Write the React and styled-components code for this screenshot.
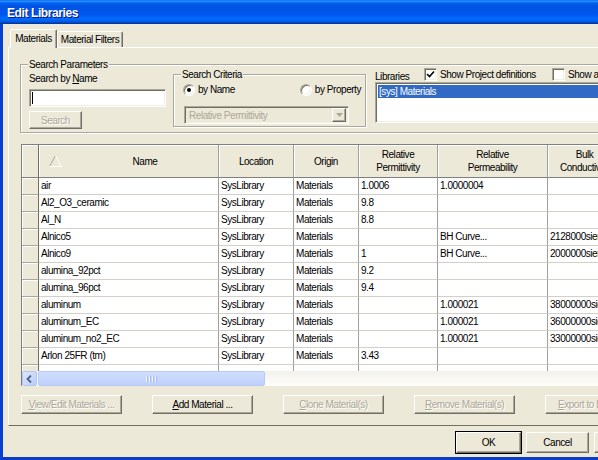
import React from 'react';
import styled, { createGlobalStyle, css } from 'styled-components';

const FACE = '#ECE9D8';
const DARK = '#716F64';
const SHADOW = '#ACA899';

const GlobalStyle = createGlobalStyle`
  html, body {
    margin: 0;
    padding: 0;
    overflow: hidden;
    background: #fff;
  }
`;

const Viewport = styled.div`
  width: 598px;
  height: 460px;
  overflow: hidden;
`;

const Window = styled.div`
  width: 720px;
  height: 460px;
  display: flex;
  flex-direction: column;
  font-family: "Liberation Sans", Arial, sans-serif;
  font-size: 10px;
  letter-spacing: -0.45px;
  color: #000;
`;

const TitleBar = styled.div`
  flex: none;
  height: 24px;
  display: flex;
  align-items: center;
  padding-left: 7px;
  padding-top: 1px;
  box-sizing: border-box;
  background: linear-gradient(
    to bottom,
    #0058ee 0%,
    #3593ff 4%,
    #288eff 6%,
    #127dff 8%,
    #036ffc 10%,
    #0262ee 14%,
    #0057e5 20%,
    #0054e3 24%,
    #0055eb 56%,
    #005bf5 66%,
    #026afe 76%,
    #0062ef 86%,
    #0052d6 92%,
    #0040ab 96%,
    #003092 100%
  );
  color: #fff;
  font-weight: bold;
  font-size: 12px;
  letter-spacing: -0.4px;
  text-shadow: 1px 1px 0 #0a1883;
`;

const Frame = styled.div`
  flex: 1;
  min-height: 0;
  display: flex;
  flex-direction: column;
  background: ${FACE};
  border-left: 3px solid #0840d6;
  border-bottom: 3px solid #0a3cc8;
`;

/* ---------- tabs ---------- */

const TabRow = styled.div`
  position: relative;
  z-index: 1;
  display: flex;
  align-items: flex-end;
  height: 18px;
  margin-top: 5px;
  padding-left: 7px;
`;

const Tab = styled.div`
  box-sizing: border-box;
  width: ${p => p.$w}px;
  height: ${p => (p.$active ? 19 : 16)}px;
  margin-bottom: ${p => (p.$active ? -1 : 0)}px;
  display: flex;
  align-items: center;
  justify-content: center;
  padding-bottom: ${p => (p.$active ? 1 : 0)}px;
  background: ${FACE};
  border: 1px solid;
  border-bottom: none;
  border-color: #fff ${DARK} transparent #fff;
  box-shadow: inset -1px 0 0 ${SHADOW};
  border-radius: 2px 2px 0 0;
`;

const TabPanel = styled.div`
  box-sizing: border-box;
  height: 379px;
  margin-left: 5px;
  padding-left: 11px;
  border-top: 1px solid #fff;
  border-left: 1px solid #fff;
  border-bottom: 1px solid ${DARK};
  display: flex;
  flex-direction: column;
`;

/* ---------- group boxes ---------- */

const GroupBox = styled.div`
  position: relative;
  box-sizing: border-box;
  flex: none;
  width: ${p => p.$w}px;
  height: ${p => p.$h}px;
  border: 1px solid ${SHADOW};
  box-shadow: inset 1px 1px 0 #fff, 1px 1px 0 #fff;
`;

const Legend = styled.span`
  position: absolute;
  top: -7px;
  left: 7px;
  padding: 0 1px;
  line-height: 13px;
  background: ${FACE};
`;

const SearchParams = styled(GroupBox)`
  margin-top: 16px;
  display: flex;
  align-items: flex-start;
`;

const NameColumn = styled.div`
  width: 137px;
  margin-left: 8px;
  padding-top: 7px;
  display: flex;
  flex-direction: column;
`;

const FieldLabel = styled.div`
  line-height: 13px;
  white-space: nowrap;
`;

const Sunken = css`
  box-sizing: border-box;
  border: 1px solid;
  border-color: ${SHADOW} #fff #fff ${SHADOW};
  box-shadow: inset 1px 1px 0 ${DARK}, inset -1px -1px 0 #f1efe2;
`;

const TextBox = styled.div`
  ${Sunken};
  height: 18px;
  margin-top: 4px;
  background: #fff;
  display: flex;
  align-items: center;
  padding-left: 2px;
`;

const Caret = styled.span`
  width: 1px;
  height: 12px;
  background: #000;
`;

const Button = styled.div`
  box-sizing: border-box;
  flex: none;
  width: ${p => p.$w}px;
  height: ${p => p.$h}px;
  display: flex;
  align-items: center;
  justify-content: center;
  white-space: nowrap;
  background: ${FACE};
  border: 1px solid;
  border-color: #fff ${DARK} ${DARK} #fff;
  box-shadow: inset -1px -1px 0 ${SHADOW};
  color: ${p => (p.$disabled ? SHADOW : '#000')};
  text-shadow: ${p => (p.$disabled ? '1px 1px 0 #fff' : 'none')};
  ${p =>
    p.$default &&
    css`
      outline: 1px solid #000;
      outline-offset: 0;
    `}
`;

const SearchButton = styled(Button)`
  margin-top: 4px;
`;

const Criteria = styled(GroupBox)`
  margin-left: 7px;
  margin-top: 9px;
  display: flex;
  flex-direction: column;
`;

const RadioRow = styled.div`
  display: flex;
  justify-content: space-between;
  align-items: center;
  height: 12px;
  margin-top: 9px;
  padding: 0 4px 0 9px;
`;

const RadioItem = styled.label`
  display: flex;
  align-items: center;
  gap: 3px;
  line-height: 12px;
  white-space: nowrap;
`;

const RadioDot = styled.span`
  box-sizing: border-box;
  width: 12px;
  height: 12px;
  border-radius: 50%;
  display: flex;
  align-items: center;
  justify-content: center;
  background: #fff;
  border: 1px solid;
  border-color: ${SHADOW} #fff #fff ${SHADOW};
  box-shadow: inset 1px 1px 0 ${DARK}, inset -1px -1px 0 #f1efe2;

  &::after {
    content: '';
    width: 4px;
    height: 4px;
    border-radius: 50%;
    background: ${p => (p.$on ? '#000' : 'transparent')};
  }
`;

const Combo = styled.div`
  ${Sunken};
  width: 165px;
  height: 18px;
  margin: 10px 0 0 10px;
  display: flex;
  align-items: center;
  justify-content: space-between;
  padding: 2px;
  color: ${SHADOW};
  white-space: nowrap;
`;

const ComboText = styled.span`
  padding-left: 2px;
`;

const ComboArrow = styled.span`
  box-sizing: border-box;
  width: 14px;
  height: 14px;
  display: flex;
  align-items: center;
  justify-content: center;
  background: ${FACE};
  border: 1px solid;
  border-color: #fff ${DARK} ${DARK} #fff;
  box-shadow: inset -1px -1px 0 ${SHADOW};
`;

const LibraryColumn = styled.div`
  margin-left: 9px;
  margin-top: 3px;
  display: flex;
  flex-direction: column;
`;

const LibraryHeader = styled.div`
  display: flex;
  align-items: center;
  height: 13px;
`;

const LibraryLabel = styled.span`
  width: 49px;
  line-height: 13px;
  padding-top: 3px;
`;

const CheckItem = styled.label`
  display: flex;
  align-items: center;
  gap: 3px;
  margin-left: ${p => p.$ml || 0}px;
  white-space: nowrap;
`;

const CheckBox = styled.span`
  ${Sunken};
  width: 13px;
  height: 13px;
  background: #fff;
  display: flex;
  align-items: center;
  justify-content: center;
`;

const ListBox = styled.div`
  ${Sunken};
  width: 320px;
  height: 41px;
  margin-top: 1px;
  background: #fff;
  padding: 2px 0 0 2px;
`;

const ListItem = styled.div`
  height: 13px;
  line-height: 13px;
  padding-left: 1px;
  background: ${p => (p.$selected ? '#316AC5' : 'transparent')};
  color: ${p => (p.$selected ? '#fff' : '#000')};
`;

/* ---------- grid ---------- */

const Grid = styled.div`
  box-sizing: border-box;
  width: 700px;
  height: 242px;
  margin: 11px 0 0 1px;
  border-top: 1px solid #7f7f7f;
  border-left: 1px solid #7f7f7f;
  display: flex;
  flex-direction: column;
  background: #fff;
`;

const GridBody = styled.div`
  height: 226px;
  overflow: hidden;
`;

const HeaderRow = styled.div`
  display: flex;
  height: 33px;
  background: ${FACE};
`;

const HeaderCell = styled.div`
  box-sizing: border-box;
  flex: none;
  width: ${p => p.$w}px;
  height: 33px;
  display: flex;
  flex-direction: column;
  align-items: center;
  justify-content: center;
  line-height: 13px;
  text-align: center;
  white-space: nowrap;
  border-right: 1px solid #a0a0a0;
  border-bottom: 1px solid #7f7f7f;
  box-shadow: inset 1px 1px 0 #fff;
`;

const NameHeader = styled(HeaderCell)`
  flex-direction: row;
  justify-content: flex-start;
  padding-left: 9px;
`;

const NameHeaderText = styled.span`
  flex: 1;
  text-align: center;
  padding-left: 9px;
`;

const DataRow = styled.div`
  display: flex;
  height: 17px;
`;

const RowHead = styled.div`
  box-sizing: border-box;
  flex: none;
  width: 17px;
  background: ${FACE};
  border-right: 1px solid ${DARK};
  border-bottom: 1px solid ${SHADOW};
  box-shadow: inset 1px 1px 0 #fff;
`;

const Corner = styled(RowHead)`
  height: 33px;
  border-bottom-color: #7f7f7f;
`;

const Cell = styled.div`
  box-sizing: border-box;
  flex: none;
  width: ${p => p.$w}px;
  padding-left: 2px;
  line-height: 16px;
  white-space: nowrap;
  overflow: hidden;
  border-right: 1px solid #a0a0a0;
  border-bottom: 1px solid #d4d0c8;
`;

const HScroll = styled.div`
  flex: none;
  height: 15px;
  display: flex;
  background: linear-gradient(to bottom, #f3f1ec, #fefefb);
`;

const ScrollButton = styled.div`
  box-sizing: border-box;
  width: 15px;
  height: 15px;
  display: flex;
  align-items: center;
  justify-content: center;
  border: 1px solid #b3c6f2;
  border-radius: 2px;
  background: linear-gradient(135deg, #dde7fe, #b9cdf8);
`;

const ScrollThumb = styled.div`
  box-sizing: border-box;
  width: ${p => p.$w}px;
  height: 15px;
  margin-left: 1px;
  display: flex;
  align-items: center;
  justify-content: center;
  gap: 1px;
  border: 1px solid #b6caf6;
  border-radius: 2px;
  background: linear-gradient(to bottom, #cfdcfd, #bed0fb);
`;

const Grip = styled.span`
  width: 1px;
  height: 6px;
  background: #eef3ff;
  box-shadow: 1px 0 0 #a6bcf1;
  margin-right: 1px;
`;

/* ---------- button rows ---------- */

const ActionRow = styled.div`
  display: flex;
  gap: 30px;
  margin: 9px 0 0 1px;
`;

const Footer = styled.div`
  flex: 1;
  display: flex;
  gap: 5px;
  padding: 6px 0 0 453px;
`;

const Key = styled.span`
  text-decoration: underline;
`;

const columns = [
  { key: 'name', w: 180 },
  { key: 'loc', label: ['Location'], w: 75 },
  { key: 'origin', label: ['Origin'], w: 65 },
  { key: 'perm', label: ['Relative', 'Permittivity'], w: 79 },
  { key: 'mu', label: ['Relative', 'Permeability'], w: 110 },
  { key: 'cond', label: ['Bulk', 'Conductivity'], w: 74 },
  { key: 'tan', label: ['Dielectric Loss', 'Tangent'], w: 100 },
];

const rows = [
  { name: 'air', perm: '1.0006', mu: '1.0000004' },
  { name: 'Al2_O3_ceramic', perm: '9.8' },
  { name: 'Al_N', perm: '8.8' },
  { name: 'Alnico5', mu: 'BH Curve...', cond: '2128000siemens/m' },
  { name: 'Alnico9', perm: '1', mu: 'BH Curve...', cond: '2000000siemens/m' },
  { name: 'alumina_92pct', perm: '9.2' },
  { name: 'alumina_96pct', perm: '9.4' },
  { name: 'aluminum', mu: '1.000021', cond: '38000000siemens/m' },
  { name: 'aluminum_EC', mu: '1.000021', cond: '36000000siemens/m' },
  { name: 'aluminum_no2_EC', mu: '1.000021', cond: '33000000siemens/m' },
  { name: 'Arlon 25FR (tm)', perm: '3.43' },
];

const SortGlyph = () => (
  <svg width="15" height="14" viewBox="0 0 15 14">
    <path d="M1.5 12.5 L7.5 1.5" stroke="#aca899" fill="none" />
    <path d="M7.5 1.5 L13.5 12.5 L1.5 12.5" stroke="#fff" fill="none" />
  </svg>
);

const CheckMark = () => (
  <svg width="9" height="9" viewBox="0 0 9 9">
    <path d="M1 4 L3.5 6.5 L8 1.5" stroke="#000" strokeWidth="1.6" fill="none" />
  </svg>
);

const DownArrow = () => (
  <svg width="7" height="4" viewBox="0 0 7 4">
    <path d="M0 0 H7 L3.5 4 Z" fill="#aca899" />
  </svg>
);

const LeftChevron = () => (
  <svg width="7" height="8" viewBox="0 0 7 8">
    <path d="M5 0.5 L1.5 4 L5 7.5" stroke="#4d6185" strokeWidth="1.8" fill="none" />
  </svg>
);

const cellText = (row, key) => {
  if (!row) return '';
  if (key === 'loc') return 'SysLibrary';
  if (key === 'origin') return 'Materials';
  return row[key] || '';
};

const App = () => (
  <Viewport>
    <GlobalStyle />
    <Window>
      <TitleBar>Edit Libraries</TitleBar>
      <Frame>
        <TabRow>
          <Tab $active $w={47}>Materials</Tab>
          <Tab $w={66}>Material Filters</Tab>
        </TabRow>

        <TabPanel>
          <SearchParams $w={700} $h={69}>
            <Legend>Search Parameters</Legend>
            <NameColumn>
              <FieldLabel>
                Search by <Key>N</Key>ame
              </FieldLabel>
              <TextBox>
                <Caret />
              </TextBox>
              <SearchButton $w={53} $h={18} $disabled>
                Search
              </SearchButton>
            </NameColumn>

            <Criteria $w={193} $h={53}>
              <Legend>Search Criteria</Legend>
              <RadioRow>
                <RadioItem>
                  <RadioDot $on />
                  by Name
                </RadioItem>
                <RadioItem>
                  <RadioDot />
                  by Property
                </RadioItem>
              </RadioRow>
              <Combo>
                <ComboText>Relative Permittivity</ComboText>
                <ComboArrow>
                  <DownArrow />
                </ComboArrow>
              </Combo>
            </Criteria>

            <LibraryColumn>
              <LibraryHeader>
                <LibraryLabel>Libraries</LibraryLabel>
                <CheckItem>
                  <CheckBox>
                    <CheckMark />
                  </CheckBox>
                  Show Project definitions
                </CheckItem>
                <CheckItem $ml={16}>
                  <CheckBox />
                  Show all libraries
                </CheckItem>
              </LibraryHeader>
              <ListBox>
                <ListItem $selected>[sys] Materials</ListItem>
              </ListBox>
            </LibraryColumn>
          </SearchParams>

          <Grid>
            <GridBody>
              <HeaderRow>
                <Corner />
                <NameHeader $w={columns[0].w}>
                  <SortGlyph />
                  <NameHeaderText>Name</NameHeaderText>
                </NameHeader>
                {columns.slice(1).map(col => (
                  <HeaderCell key={col.key} $w={col.w}>
                    {col.label.map(line => (
                      <span key={line}>{line}</span>
                    ))}
                  </HeaderCell>
                ))}
              </HeaderRow>
              {[...rows, null].map((row, i) => (
                <DataRow key={i}>
                  <RowHead />
                  {columns.map(col => (
                    <Cell key={col.key} $w={col.w}>
                      {cellText(row, col.key)}
                    </Cell>
                  ))}
                </DataRow>
              ))}
            </GridBody>
            <HScroll>
              <ScrollButton>
                <LeftChevron />
              </ScrollButton>
              <ScrollThumb $w={227}>
                <Grip />
                <Grip />
                <Grip />
                <Grip />
              </ScrollThumb>
            </HScroll>
          </Grid>

          <ActionRow>
            <Button $w={101} $h={19} $disabled>
              <span>
                <Key>V</Key>iew/Edit Materials ...
              </span>
            </Button>
            <Button $w={101} $h={19}>
              <span>
                <Key>A</Key>dd Material ...
              </span>
            </Button>
            <Button $w={101} $h={19} $disabled>
              <span>
                <Key>C</Key>lone Material(s)
              </span>
            </Button>
            <Button $w={101} $h={19} $disabled>
              <span>
                <Key>R</Key>emove Material(s)
              </span>
            </Button>
            <Button $w={101} $h={19} $disabled>
              <span>
                <Key>E</Key>xport to Library ...
              </span>
            </Button>
          </ActionRow>
        </TabPanel>

        <Footer>
          <Button $w={65} $h={21} $default>
            OK
          </Button>
          <Button $w={63} $h={21}>
            Cancel
          </Button>
          <Button $w={63} $h={21}>
            Help
          </Button>
        </Footer>
      </Frame>
    </Window>
  </Viewport>
);

export default App;
